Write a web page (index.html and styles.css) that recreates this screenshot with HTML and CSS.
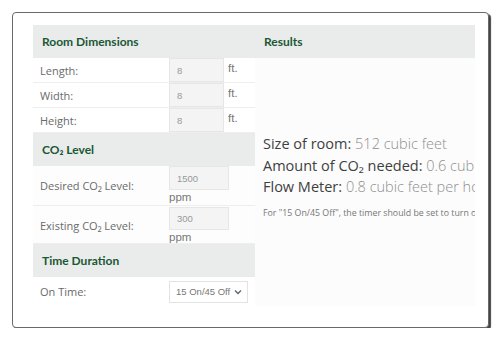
FILE: index.html
```html
<!DOCTYPE html>
<html>
<head>
  <link rel="stylesheet" href="styles.css">
</head>
<body>
  <div class="frame">
    <div class="calc">
      <div class="col col-inputs">
        <div class="section-head">Room Dimensions</div>
        <div class="row">
          <div class="label">Length:</div>
          <div class="value"><input class="field" type="text" value="8"><span class="unit">ft.</span></div>
        </div>
        <div class="row">
          <div class="label">Width:</div>
          <div class="value"><input class="field" type="text" value="8"><span class="unit">ft.</span></div>
        </div>
        <div class="row">
          <div class="label">Height:</div>
          <div class="value"><input class="field" type="text" value="8"><span class="unit">ft.</span></div>
        </div>

        <div class="section-head">CO₂ Level</div>
        <div class="row row-tall">
          <div class="label">Desired CO₂ Level:</div>
          <div class="value"><input class="field field-wide" type="text" value="1500"><span class="unit">ppm</span></div>
        </div>
        <div class="row row-tall row-tall2">
          <div class="label">Existing CO₂ Level:</div>
          <div class="value"><input class="field field-wide" type="text" value="300"><span class="unit">ppm</span></div>
        </div>

        <div class="section-head">Time Duration</div>
        <div class="row row-select">
          <div class="label">On Time:</div>
          <div class="value">
            <div class="select">
              <span>15 On/45 Off</span>
              <svg width="8" height="6" viewBox="0 0 8 6"><path d="M1 1.5 L4 4.5 L7 1.5" fill="none" stroke="#666" stroke-width="1.4"/></svg>
            </div>
          </div>
        </div>
      </div>

      <div class="col col-results">
        <div class="section-head">Results</div>
        <div class="results">
          <p class="result"><span class="r-label">Size of room:</span> <span class="r-value">512 cubic feet</span></p>
          <p class="result"><span class="r-label">Amount of CO₂ needed:</span> <span class="r-value">0.6 cubic feet</span></p>
          <p class="result"><span class="r-label">Flow Meter:</span> <span class="r-value">0.8 cubic feet per hour</span></p>
          <p class="note">For "15 On/45 Off", the timer should be set to turn on for 15 minutes every hour.</p>
        </div>
      </div>
    </div>
  </div>
</body>
</html>
```

FILE: styles.css
```css
body {
  margin: 0;
  padding: 12px 0 0 12px;
  background: #fff;
  font-family: "Open Sans", "Liberation Sans", sans-serif;
}

.frame {
  width: 455px;
  height: 302px;
  padding: 12px 0 0 20px;
  border: 1px solid #6a6a6a;
  border-radius: 4px;
  box-shadow: 2px 2px 1px #444;
  background: #fff;
}

.calc {
  display: flex;
  width: 442px;
  overflow: hidden;
}

.col-inputs {
  width: 222px;
  flex: none;
}

.col-results {
  width: 220px;
  flex: none;
  display: flex;
  flex-direction: column;
}

.section-head {
  height: 33px;
  line-height: 33px;
  padding-left: 9px;
  background: #e9ecea;
  color: #1b5735;
  font-family: Lato, "Liberation Sans", sans-serif;
  font-weight: bold;
  font-size: 12px;
}

.row {
  display: flex;
  height: 25px;
  border-bottom: 1px solid #eeeeee;
  box-sizing: border-box;
  background: #fff;
}

.label {
  width: 136px;
  flex: none;
  padding-left: 7px;
  box-sizing: border-box;
  display: flex;
  align-items: center;
  font-size: 11px;
  color: #6a6a6a;
}

.value {
  width: 86px;
  flex: none;
  font-family: "Liberation Sans", Arial, sans-serif;
  font-size: 11.5px;
  color: #777;
  line-height: 16px;
}

.field {
  box-sizing: border-box;
  width: 55px;
  height: 24px;
  margin: 0;
  padding: 0 7px;
  border: 1px solid #e6e6e6;
  background: #f4f4f4;
  font-family: "Liberation Sans", Arial, sans-serif;
  font-size: 9.5px;
  color: #999;
  vertical-align: top;
}

.field-wide {
  width: 60px;
}

.unit {
  display: inline-block;
  padding-left: 4px;
  line-height: 20px;
  vertical-align: top;
}

.row-tall {
  height: 40px;
  background: #fdfdfd;
}

.row-tall .unit {
  display: block;
  padding-left: 0;
  line-height: 15px;
}

.row-tall2 {
  height: 38px;
  padding-top: 1px;
}

.row-tall2 .field {
  height: 23px;
}

.row-select {
  height: 29px;
  border-bottom: none;
}

.row-select .value {
  display: flex;
  align-items: center;
}

.select {
  box-sizing: border-box;
  width: 79px;
  height: 22px;
  display: flex;
  align-items: center;
  justify-content: space-between;
  padding: 0 5px 0 6px;
  border: 1px solid #e3e3e3;
  background: #fff;
  font-size: 9.5px;
  color: #777;
}

.results {
  height: 248px;
  background: #fcfcfc;
  display: flex;
  flex-direction: column;
  justify-content: center;
  padding-left: 8px;
  padding-bottom: 12px;
  box-sizing: border-box;
  white-space: nowrap;
  overflow: hidden;
}

.result {
  margin: 0;
  font-size: 14.5px;
  line-height: 21.5px;
  color: #3f3f3f;
}

.r-value {
  color: #8f8f8f;
  font-weight: 300;
}

.note {
  margin: 9px 0 0;
  font-size: 8.8px;
  color: #777;
}
```
